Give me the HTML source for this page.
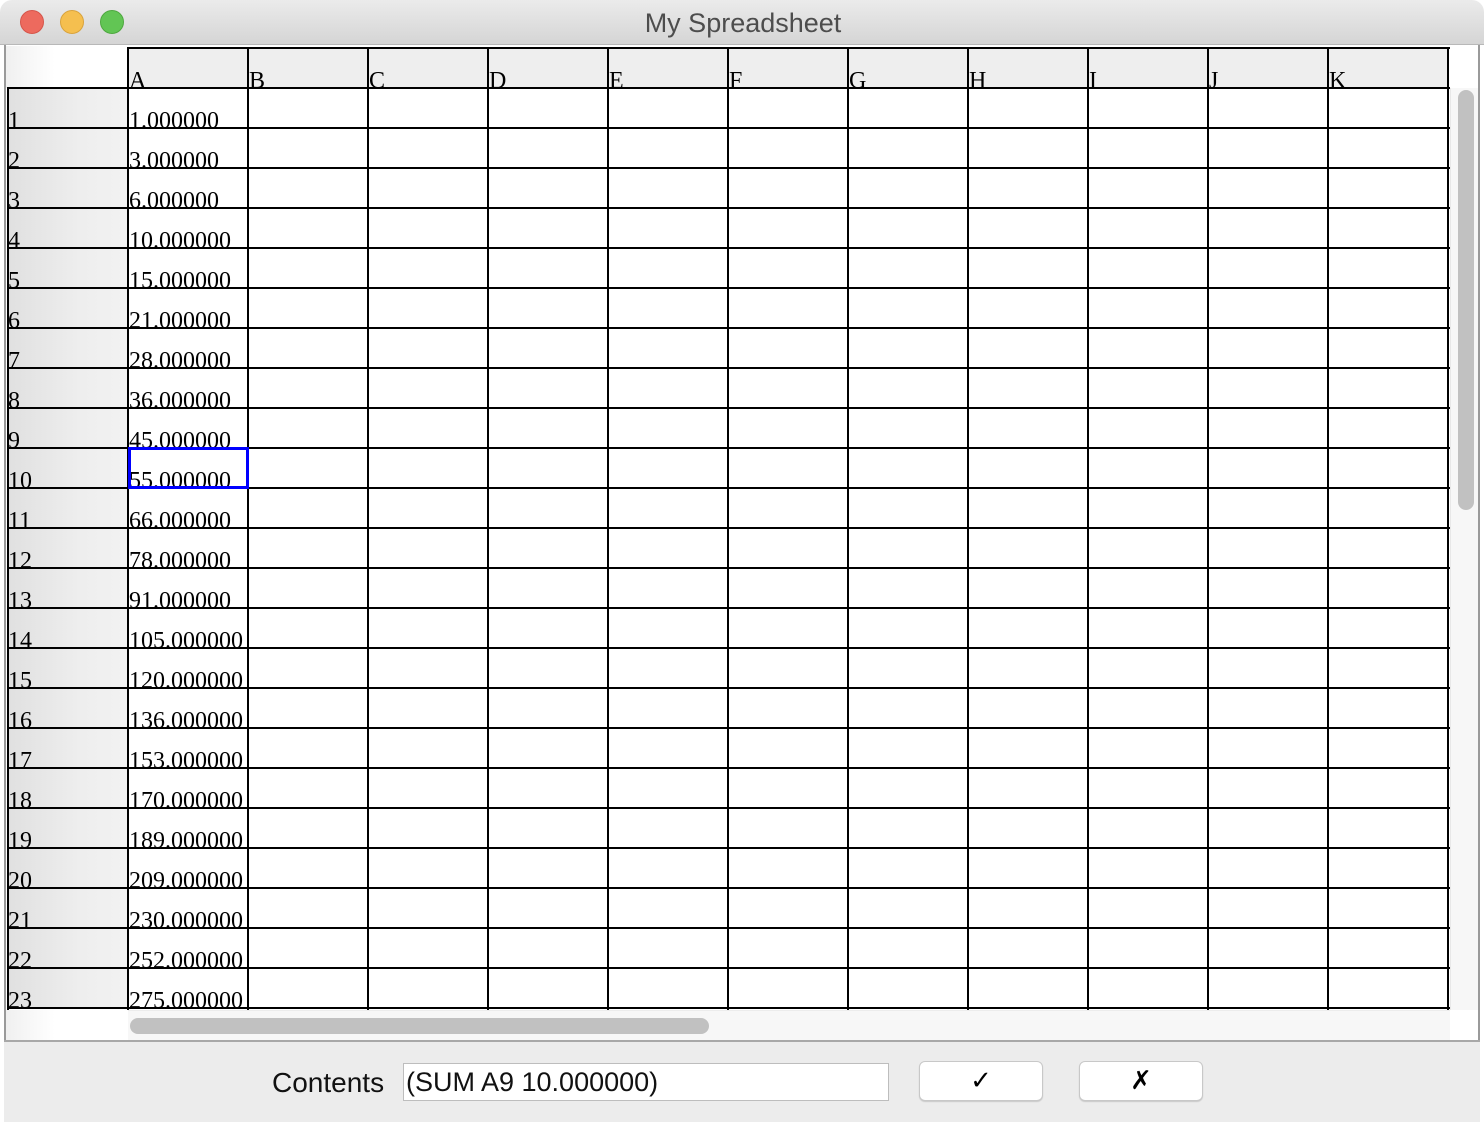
<!DOCTYPE html>
<html><head><meta charset="utf-8"><style>
html,body{margin:0;padding:0;width:1484px;height:1122px;overflow:hidden;background:#fff;}
*{box-sizing:border-box;}
.abs{position:absolute;}
.t{position:absolute;font-family:"Liberation Serif",serif;font-size:24px;line-height:24px;color:#000;white-space:nowrap;}
</style></head><body>
<div class="abs" style="left:0;top:0;width:1484px;height:1122px;background:#fff;border-radius:12px 12px 0 0;overflow:hidden;">
<div class="abs" style="left:0;top:0;width:1484px;height:45px;background:linear-gradient(#ebebeb,#d5d5d5);border-bottom:1px solid #b8b8b8;"></div>
<div class="abs" style="left:20px;top:10px;width:24px;height:24px;border-radius:50%;background:#ed6a5e;border:1px solid #d5554a;"></div>
<div class="abs" style="left:60px;top:10px;width:24px;height:24px;border-radius:50%;background:#f5bf4f;border:1px solid #d9a33c;"></div>
<div class="abs" style="left:100px;top:10px;width:24px;height:24px;border-radius:50%;background:#62c554;border:1px solid #4ea83f;"></div>
<div class="abs" style="left:0;top:7px;width:1486px;text-align:center;font-family:'Liberation Sans',sans-serif;font-size:27px;color:#4d4d4d;line-height:32px;">My Spreadsheet</div>
<div class="abs" style="left:4px;top:45px;width:2px;height:1000px;background:#9a9a9a;"></div>
<div class="abs" style="left:1478px;top:45px;width:2px;height:1000px;background:#9a9a9a;"></div>
<div class="abs" style="left:6px;top:46px;width:122px;height:42px;background:linear-gradient(to right,#f0f0f0,#fff 40%);"></div>
<div class="abs" style="left:128px;top:48px;width:1320px;height:40px;background:#eeeeee;"></div>
<div class="abs" style="left:8px;top:88px;width:120px;height:920px;background:linear-gradient(to right,#e0e0e0,#eeeeee 60%,#f2f2f2);"></div>
<div class="abs" style="left:127px;top:47px;width:1323px;height:963px;background:repeating-linear-gradient(to right,#000 0 2px,transparent 2px 120px),repeating-linear-gradient(to bottom,#000 0 2px,transparent 2px 40px);"></div>
<div class="abs" style="left:7px;top:87px;width:121px;height:923px;background:linear-gradient(to right,#000 0 2px,transparent 2px),repeating-linear-gradient(to bottom,#000 0 2px,transparent 2px 40px);"></div>
<div class="t" style="left:129px;top:69px">A</div>
<div class="t" style="left:249px;top:69px">B</div>
<div class="t" style="left:369px;top:69px">C</div>
<div class="t" style="left:489px;top:69px">D</div>
<div class="t" style="left:609px;top:69px">E</div>
<div class="t" style="left:729px;top:69px">F</div>
<div class="t" style="left:849px;top:69px">G</div>
<div class="t" style="left:969px;top:69px">H</div>
<div class="t" style="left:1089px;top:69px">I</div>
<div class="t" style="left:1209px;top:69px">J</div>
<div class="t" style="left:1329px;top:69px">K</div>
<div class="t" style="left:8px;top:109px">1</div>
<div class="t" style="left:8px;top:149px">2</div>
<div class="t" style="left:8px;top:189px">3</div>
<div class="t" style="left:8px;top:229px">4</div>
<div class="t" style="left:8px;top:269px">5</div>
<div class="t" style="left:8px;top:309px">6</div>
<div class="t" style="left:8px;top:349px">7</div>
<div class="t" style="left:8px;top:389px">8</div>
<div class="t" style="left:8px;top:429px">9</div>
<div class="t" style="left:8px;top:469px">10</div>
<div class="t" style="left:8px;top:509px">11</div>
<div class="t" style="left:8px;top:549px">12</div>
<div class="t" style="left:8px;top:589px">13</div>
<div class="t" style="left:8px;top:629px">14</div>
<div class="t" style="left:8px;top:669px">15</div>
<div class="t" style="left:8px;top:709px">16</div>
<div class="t" style="left:8px;top:749px">17</div>
<div class="t" style="left:8px;top:789px">18</div>
<div class="t" style="left:8px;top:829px">19</div>
<div class="t" style="left:8px;top:869px">20</div>
<div class="t" style="left:8px;top:909px">21</div>
<div class="t" style="left:8px;top:949px">22</div>
<div class="t" style="left:8px;top:989px">23</div>
<div class="t" style="left:129px;top:109px">1.000000</div>
<div class="t" style="left:129px;top:149px">3.000000</div>
<div class="t" style="left:129px;top:189px">6.000000</div>
<div class="t" style="left:129px;top:229px">10.000000</div>
<div class="t" style="left:129px;top:269px">15.000000</div>
<div class="t" style="left:129px;top:309px">21.000000</div>
<div class="t" style="left:129px;top:349px">28.000000</div>
<div class="t" style="left:129px;top:389px">36.000000</div>
<div class="t" style="left:129px;top:429px">45.000000</div>
<div class="t" style="left:129px;top:469px">55.000000</div>
<div class="t" style="left:129px;top:509px">66.000000</div>
<div class="t" style="left:129px;top:549px">78.000000</div>
<div class="t" style="left:129px;top:589px">91.000000</div>
<div class="t" style="left:129px;top:629px">105.000000</div>
<div class="t" style="left:129px;top:669px">120.000000</div>
<div class="t" style="left:129px;top:709px">136.000000</div>
<div class="t" style="left:129px;top:749px">153.000000</div>
<div class="t" style="left:129px;top:789px">170.000000</div>
<div class="t" style="left:129px;top:829px">189.000000</div>
<div class="t" style="left:129px;top:869px">209.000000</div>
<div class="t" style="left:129px;top:909px">230.000000</div>
<div class="t" style="left:129px;top:949px">252.000000</div>
<div class="t" style="left:129px;top:989px">275.000000</div>
<div class="abs" style="left:128px;top:447px;width:121px;height:42px;border:3px solid #0000ff;"></div>
<div class="abs" style="left:1450px;top:88px;width:28px;height:922px;background:#f7f7f7;border-left:1px solid #e8e8e8;"></div>
<div class="abs" style="left:1458px;top:90px;width:16px;height:420px;border-radius:8px;background:#c1c1c1;"></div>
<div class="abs" style="left:128px;top:1010px;width:1322px;height:30px;background:#f7f7f7;border-top:1px solid #ececec;"></div>
<div class="abs" style="left:130px;top:1018px;width:579px;height:16px;border-radius:8px;background:#c1c1c1;"></div>
<div class="abs" style="left:6px;top:1010px;width:122px;height:30px;background:linear-gradient(to right,#f0f0f0,#fff 40%);"></div>
<div class="abs" style="left:4px;top:1040px;width:1476px;height:82px;background:#ececec;border-top:2px solid #a8a8a8;"></div>
<div class="abs" style="left:272px;top:1066px;font-family:'Liberation Sans',sans-serif;font-size:28px;line-height:34px;color:#111;">Contents</div>
<div class="abs" style="left:403px;top:1063px;width:486px;height:38px;background:#fff;border:1px solid #bdbdbd;font-family:'Liberation Sans',sans-serif;font-size:27px;line-height:36px;padding-left:2px;color:#111;">(SUM A9 10.000000)</div>
<div class="abs" style="left:919px;top:1061px;width:124px;height:40px;background:#fff;border:1px solid #c8c8c8;border-radius:6px;box-shadow:0 1px 1px rgba(0,0,0,.15);text-align:center;font-family:'DejaVu Sans',sans-serif;font-size:26px;line-height:38px;font-weight:bold;">✓</div>
<div class="abs" style="left:1079px;top:1061px;width:124px;height:40px;background:#fff;border:1px solid #c8c8c8;border-radius:6px;box-shadow:0 1px 1px rgba(0,0,0,.15);text-align:center;font-family:'DejaVu Sans',sans-serif;font-size:26px;line-height:38px;font-weight:bold;">✗</div>
</div>
</body></html>
